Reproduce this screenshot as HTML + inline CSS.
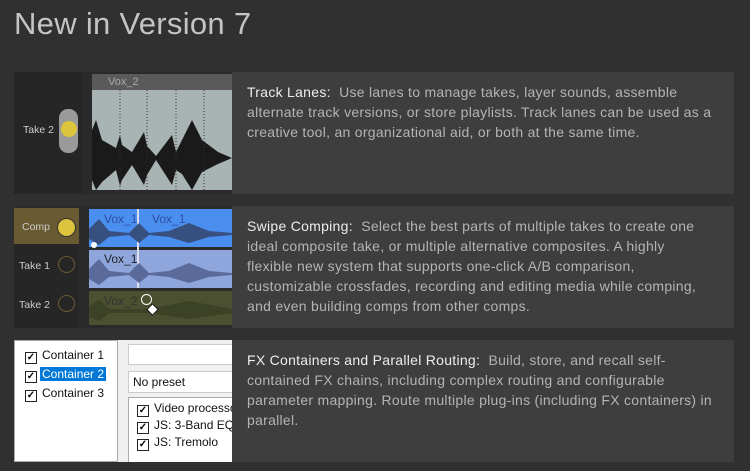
<!DOCTYPE html><html><head><style>
body{margin:0;width:750px;height:471px;background:#303030;font-family:"Liberation Sans",sans-serif;overflow:hidden;position:relative}
h1{position:absolute;left:14px;top:6px;margin:0;font-weight:normal;font-size:31px;color:#c4c4c4;letter-spacing:.3px}
.row{position:absolute;left:14px;width:720px;height:122px;background:#3e3e3e}
.img{position:absolute;left:0;top:0;width:218px;height:122px;overflow:hidden}
.txt{position:absolute;left:233px;top:10px;width:490px;font-size:14px;line-height:20px;color:#b4b4b4;white-space:nowrap;letter-spacing:.28px}
.txt b{color:#ededed;font-weight:normal}
.lbl{position:absolute;color:#ccc;font-size:10.5px}
.cb{display:inline-block;width:10px;height:10px;border:1px solid #222;background:#fff;vertical-align:-1px;margin-right:5px;font-size:10px;line-height:10px;text-align:center;color:#000;font-weight:bold}
.w{position:absolute;font-size:12px;color:#111;white-space:nowrap}
</style></head><body>
<h1>New in Version 7</h1>

<div class="row" style="top:72px">
 <div class="img" style="background:#2a2a2a">
  <div style="position:absolute;left:0;top:0;width:68px;height:122px;background:#262626"></div>
  <div class="lbl" style="left:9px;top:52px">Take 2</div>
  <div style="position:absolute;left:45px;top:37px;width:19px;height:44px;background:#9a9a9a;border-radius:9px"></div>
  <div style="position:absolute;left:47px;top:49px;width:16px;height:16px;background:#dcc53c;border-radius:50%"></div>
  <div style="position:absolute;left:78px;top:2px;width:140px;height:16px;background:#5a5a5a;color:#aaa;font-size:11px;padding-left:16px;box-sizing:border-box;line-height:16px">Vox_2</div>
  <div style="position:absolute;left:78px;top:18px;width:140px;height:100px;background:#a8b4b4"></div>
  <svg style="position:absolute;left:78px;top:18px" width="140" height="100"><path d="M0 40 L4 30 L10 50 L24 58 L28 45 L30 55 L40 62 L52 42 L55 56 L64 66 L80 45 L84 62 L90 50 L100 30 L110 50 L126 62 L140 68 L126 74 L110 82 L100 100 L90 84 L84 80 L80 95 L64 70 L55 85 L52 95 L40 75 L30 90 L28 96 L24 80 L10 92 L4 100 L0 90Z" fill="#1a1a1a"/><g stroke="#333" stroke-dasharray="1 2"><line x1="28" y1="0" x2="28" y2="100"/><line x1="55" y1="0" x2="55" y2="100"/><line x1="84" y1="0" x2="84" y2="100"/><line x1="112" y1="0" x2="112" y2="100"/></g></svg>
 </div>
 <div class="txt"><b>Track Lanes:</b>&nbsp; Use lanes to manage takes, layer sounds, assemble<br>alternate track versions, or store playlists. Track lanes can be used as a<br>creative tool, an organizational aid, or both at the same time.</div>
</div>

<div class="row" style="top:206px">
 <div class="img" style="background:#2a2a2a">
  <div style="position:absolute;left:0;top:2px;width:65px;height:36px;background:#6a5a32"></div>
  <div style="position:absolute;left:0;top:38px;width:65px;height:84px;background:#262626"></div>
  <div class="lbl" style="left:8px;top:15px">Comp</div>
  <div class="lbl" style="left:5px;top:54px">Take 1</div>
  <div class="lbl" style="left:5px;top:93px">Take 2</div>
  <div style="position:absolute;left:43px;top:12px;width:17px;height:17px;background:#dcc53c;border-radius:50%;border:1px solid #333"></div>
  <div style="position:absolute;left:44px;top:50px;width:15px;height:15px;border:1px solid #6a5a32;border-radius:50%"></div>
  <div style="position:absolute;left:44px;top:89px;width:15px;height:15px;border:1px solid #6a5a32;border-radius:50%"></div>
  <div style="position:absolute;left:75px;top:3px;width:143px;height:38px;background:#4a8ef0"></div>
  <div style="position:absolute;left:75px;top:44px;width:143px;height:38px;background:#8ea6dc"></div>
  <div style="position:absolute;left:75px;top:85px;width:143px;height:34px;background:#4a5030"></div>
  <div style="position:absolute;left:123px;top:3px;width:2px;height:79px;background:#dde"></div>
  <div class="w" style="left:90px;top:6px;color:#2f4f9f">Vox_1</div><div class="w" style="left:138px;top:6px;color:#2f4f9f">Vox_1</div>
  <div class="w" style="left:90px;top:46px;color:#222">Vox_1</div><div class="w" style="left:90px;top:88px;color:#333">Vox_2</div>
  <svg style="position:absolute;left:75px;top:3px" width="143" height="116"><g fill="#38507f"><path d="M0 20 L10 10 L20 22 L40 24 L50 14 L60 24 L80 22 L100 14 L120 22 L143 24 L143 26 L120 28 L100 34 L80 28 L60 26 L50 34 L40 26 L20 28 L10 36 L0 30Z"/></g><g fill="#5a6a9a"><path d="M0 60 L10 50 L20 62 L40 64 L50 54 L60 64 L80 62 L100 54 L120 62 L143 64 L143 66 L120 68 L100 74 L80 68 L60 66 L50 74 L40 66 L20 68 L10 76 L0 70Z"/></g><g fill="#3c4226"><path d="M0 98 L10 90 L20 100 L60 100 L80 96 L100 92 L143 100 L143 104 L100 110 L60 104 L20 104 L10 112 L0 108Z"/></g></svg>
  <div style="position:absolute;left:77px;top:36px;width:6px;height:6px;background:#fff;border-radius:50%"></div>
  <div style="position:absolute;left:127px;top:88px;width:9px;height:9px;border:1.5px solid #fff;border-radius:50%"></div>
  <div style="position:absolute;left:134px;top:99px;width:7px;height:7px;background:#fff;transform:rotate(45deg);border:1px solid #000"></div>
 </div>
 <div class="txt"><b>Swipe Comping:</b>&nbsp; Select the best parts of multiple takes to create one<br>ideal composite take, or multiple alternative composites. A highly<br>flexible new system that supports one-click A/B comparison,<br>customizable crossfades, recording and editing media while comping,<br>and even building comps from other comps.</div>
</div>

<div class="row" style="top:340px">
 <div class="img" style="background:#f0f0f0">
  <div style="position:absolute;left:0;top:0;width:104px;height:122px;background:#fff;border:1px solid #aaa;box-sizing:border-box"></div>
  <div style="position:absolute;left:11px;top:6px;font-size:12px;color:#111;line-height:19px">
   <div><span class="cb">✓</span>Container 1</div>
   <div><span class="cb">✓</span><span style="background:#0078d7;color:#fff;padding:0 2px;margin-left:-2px">Container 2</span></div>
   <div><span class="cb">✓</span>Container 3</div>
  </div>
  <div style="position:absolute;left:114px;top:4px;width:104px;height:19px;background:#fff;border:1px solid #ccc"></div>
  <div style="position:absolute;left:114px;top:31px;width:104px;height:20px;background:#fff;border:1px solid #ccc;font-size:12px;line-height:20px;padding-left:4px;color:#111">No preset</div>
  <div style="position:absolute;left:114px;top:57px;width:104px;height:70px;background:#fff;border:1px solid #aaa;font-size:12px;line-height:17px;color:#111;padding:2px 0 0 8px;white-space:nowrap">
   <div><span class="cb">✓</span>Video processo</div><div><span class="cb">✓</span>JS: 3-Band EQ</div><div><span class="cb">✓</span>JS: Tremolo</div>
  </div>
 </div>
 <div class="txt"><b>FX Containers and Parallel Routing:</b>&nbsp; Build, store, and recall self-<br>contained FX chains, including complex routing and configurable<br>parameter mapping. Route multiple plug-ins (including FX containers) in<br>parallel.</div>
</div>
</body></html>
